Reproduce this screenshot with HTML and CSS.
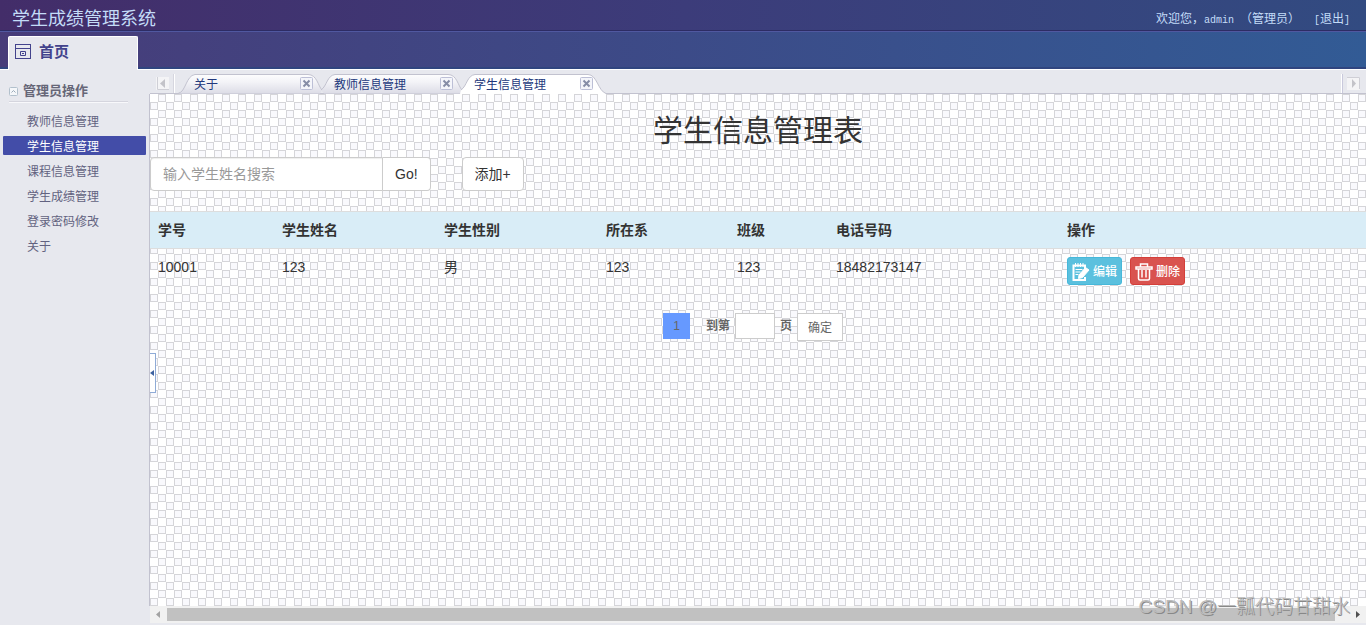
FILE: index.html
```html
<!DOCTYPE html>
<html lang="zh-CN">
<head>
<meta charset="utf-8">
<title>学生成绩管理系统</title>
<link rel="stylesheet" href="styles.css">
</head>
<body>
<svg class="defs" aria-hidden="true">
  <defs>
    <linearGradient id="tab-fill" x1="0" y1="0" x2="0" y2="1">
      <stop offset="0" stop-color="#fdfdfe"/><stop offset="0.4" stop-color="#f3f3f7"/><stop offset="1" stop-color="#dcdce6"/>
    </linearGradient>
    <symbol id="close" viewBox="0 0 13 13"><rect x=".5" y=".5" width="12" height="12" rx="1" fill="#f4f5fa" stroke="#bcbfd6"/><path d="M3.500 3.500l6 6M9.500 3.500l-6 6" stroke="#868da6" stroke-width="2"/></symbol>
  </defs>
</svg>
<header class="header">
  <div class="topbar">
    <h1 class="brand">学生成绩管理系统</h1>
    <p class="welcome">欢迎您，<span class="mono">admin&nbsp;</span>（管理员）</p>
    <a class="logout" href="#"><span class="mono">[</span>退出<span class="mono">]</span></a>
  </div>
  <nav class="mainnav">
    <a class="home" href="#">
      <svg width="16" height="16" viewBox="0 0 16 16" fill="none" stroke="#43438c"><rect x=".5" y=".5" width="15" height="14"/><path d="M1 4.500h14M5.500 7.500h5v4h-5zM7 9.500h2"/></svg>
      首页
    </a>
  </nav>
</header>
<div class="layout">
  <aside class="sidebar">
    <h2 class="group">
      <svg width="9" height="9" viewBox="0 0 9 9" fill="none"><rect x=".5" y=".5" width="8" height="8" rx="1" fill="#f5f7fa" stroke="#b2c0cc"/><path d="M2.500 5.500l2-2 2 2" stroke="#9aaab8"/></svg>
      管理员操作
    </h2>
    <ul class="menu">
      <li><a href="#">教师信息管理</a></li>
      <li><a class="current" href="#">学生信息管理</a></li>
      <li><a href="#">课程信息管理</a></li>
      <li><a href="#">学生成绩管理</a></li>
      <li><a href="#">登录密码修改</a></li>
      <li><a href="#">关于</a></li>
    </ul>
  </aside>
  <main class="main">
    <div class="tabs">
      <button class="scroll left" aria-label="向左"><svg width="13" height="13" viewBox="0 0 13 13"><path d="M0 0h13v13H0z" fill="#f4f4f6"/><path d="M1.500 0v12.500H13" fill="none" stroke="#cfcfd6"/><path d="M9 2v9L4 6.500z" fill="#c3c3c9"/></svg></button>
      <div class="tablist">
        <div class="tab"><svg class="shape" width="150" height="20" viewBox="0 0 150 20"><path d="M-2 19.500C6 18 6 1.500 15 .5H128C137 .5 138 12 142 16L140 19.500z" fill="url(#tab-fill)"/><path d="M-2 19.500C6 18 6 1.500 15 .5H128C137 .5 138 12 142 16" fill="none" stroke="#c2c2cf"/></svg><span class="tabname">关于</span><button class="close" aria-label="关闭"><svg width="13" height="13"><use href="#close"/></svg></button></div>
        <div class="tab"><svg class="shape" width="150" height="20" viewBox="0 0 150 20"><path d="M1 16C7 12 7 1.500 15 .5H128C137 .5 138 12 142 16L140 19.500H4z" fill="url(#tab-fill)"/><path d="M1 16C7 12 7 1.500 15 .5H128C137 .5 138 12 142 16" fill="none" stroke="#c2c2cf"/></svg><span class="tabname">教师信息管理</span><button class="close" aria-label="关闭"><svg width="13" height="13"><use href="#close"/></svg></button></div>
        <div class="tab active"><svg class="shape" width="150" height="20" viewBox="0 0 150 20"><path d="M1 16C7 12 7 1.500 15 .5H128C137 .5 138 17 146 19.500V20H0z" fill="#fff"/><path d="M1 16C7 12 7 1.500 15 .5H128C137 .5 138 17 146 19.500" fill="none" stroke="#c2c2cf"/></svg><span class="tabname">学生信息管理</span><button class="close" aria-label="关闭"><svg width="13" height="13"><use href="#close"/></svg></button></div>
      </div>
      <button class="scroll right" aria-label="向右"><svg width="13" height="13" viewBox="0 0 13 13"><path d="M0 0h13v13H0z" fill="#f4f4f6"/><path d="M0 .5h12.500V12" fill="none" stroke="#cfcfd6"/><path d="M5 2v9l4-4.500z" fill="#c3c3c9"/></svg></button>
    </div>
    <section class="page">
      <button class="splitter" aria-label="收起菜单"><svg width="4" height="6" viewBox="0 0 4 6"><path d="M4 0v6L0 3z" fill="#3d62a0"/></svg></button>
      <h2 class="title">学生信息管理表</h2>
      <form class="search">
        <input class="query" type="text" placeholder="输入学生姓名搜索" aria-label="学生姓名">
        <button class="btn go" type="button">Go!</button>
        <button class="btn add" type="button">添加+</button>
      </form>
      <table class="students">
        <colgroup><col class="w-id"><col class="w-name"><col class="w-name"><col class="w-dept"><col class="w-class"><col class="w-phone"><col></colgroup>
        <thead><tr><th>学号</th><th>学生姓名</th><th>学生性别</th><th>所在系</th><th>班级</th><th>电话号码</th><th>操作</th></tr></thead>
        <tbody><tr><td>10001</td><td>123</td><td>男</td><td>123</td><td>123</td><td>18482173147</td>
          <td><div class="actions">
            <button class="act edit"><svg width="18" height="18" viewBox="0 0 18 18" fill="none" stroke="#fff"><path d="M13 6V2.500H1.500V17H13v-3" stroke-width="2"/><path d="M3.500 0v4M6 0v4M8.500 0v4M11 0v4"/><path d="M3.500 6.500h7M3.500 9h5M3.500 11.500h3"/><path d="M7 12l6.500-7.500L17 7l-6.500 7.500-4 1z" fill="#fff"/></svg>编辑</button>
            <button class="act delete"><svg width="18" height="18" viewBox="0 0 18 18" fill="none" stroke="#fff" stroke-width="1.500"><path d="M1 4h16v2H1zM5.500 3.500V1h7v2.500M3.500 6.500v9q0 1.500 1.500 1.500h8q1.500 0 1.500-1.500v-9M7 7v7.500M11 7v7.500"/></svg>删除</button>
          </div></td></tr></tbody>
      </table>
      <nav class="pager">
        <a class="num" href="#">1</a>
        <label class="jump" for="page-no">到第</label>
        <input class="pageno" id="page-no" type="text">
        <span class="unit">页</span>
        <button class="ok" type="button">确定</button>
      </nav>
    </section>
    <div class="hscroll" aria-hidden="true">
      <svg width="17" height="17" viewBox="0 0 17 17"><path d="M10 5v7L6 8.500z" fill="#a3a3a3"/></svg>
      <span class="thumb"></span>
      <svg width="17" height="17" viewBox="0 0 17 17"><path d="M7 5v7l4-3.500z" fill="#505050"/></svg>
    </div>
  </main>
</div>
<div class="watermark">CSDN @一瓢代码甘甜水</div>
</body>
</html>
```
FILE: styles.css
```css
* { box-sizing: border-box; }
html, body { height: 100%; }
body {
  margin: 0;
  display: flex;
  flex-direction: column;
  overflow: hidden;
  background: #e7e8ee;
  font: 12px/18px "Liberation Sans", "Noto Sans CJK SC", sans-serif;
  color: #333;
}
h1, h2, p, ul { margin: 0; padding: 0; }
a { color: inherit; text-decoration: none; }
button { font: inherit; color: inherit; padding: 0; cursor: pointer; }
svg { display: block; flex: none; }
.defs { position: absolute; width: 0; height: 0; }

.header { flex: none; border-bottom: 1px solid #fff; }
.topbar {
  display: flex;
  align-items: center;
  height: 31px;
  padding: 7px 16px 0 12px;
  background: linear-gradient(90deg, #432d69, #3c3c7a 50%, #324b81);
  border-bottom: 1px solid #2d2c64;
  color: #c4dcf8;
}
.brand { flex: 1; font-size: 18px; line-height: 22px; font-weight: 400; }
.mono { font-family: "Liberation Mono", monospace; font-size: 10px; }
.welcome { margin-right: 14px; padding-top: 2px; }
.logout { padding-top: 2px; }
.mainnav {
  display: flex;
  height: 38px;
  padding: 4px 8px 0;
  background: linear-gradient(90deg, #473c79, #3c4b88 50%, #325b95);
  border-top: 1px solid #5058a0;
  box-shadow: inset 0 -2px 0 #30457f;
}
.home {
  display: flex;
  align-items: center;
  gap: 8px;
  width: 130px;
  height: 34px;
  padding: 0 7px 4px 6px;
  background: #e7e8ee;
  border: 1px solid #fff;
  border-bottom: 0;
  border-radius: 2px 2px 0 0;
  box-shadow: 0 1px 0 #e7e8ee;
  color: #43438c;
  font-size: 15px;
  font-weight: 700;
}

.layout { display: flex; flex: 1; min-height: 0; }
.sidebar { width: 150px; flex: none; padding-top: 11px; }
.group {
  display: flex;
  align-items: center;
  gap: 5px;
  height: 21px;
  margin: 0 22px 0 9px;
  border-bottom: 1px solid #d5d5de;
  box-shadow: 0 1px 0 #f8f8fb;
  color: #666677;
  font-size: 13px;
}
.menu { list-style: none; padding: 7px 4px 0 3px; }
.menu li { padding: 2px 0 4px; }
.menu a { display: block; height: 19px; padding-left: 24px; line-height: 22px; border-radius: 1px; color: #626280; }
.menu .current { background: #434da8; color: #fff; }

.main { display: flex; flex-direction: column; flex: 1; min-width: 0; padding-bottom: 2px; }
.tabs { display: flex; flex: none; height: 24px; padding-top: 4px; border-bottom: 1px solid #c2c2cf; }
.scroll { width: 25px; border: 0; background: none; display: flex; align-items: center; flex: none; }
.left { padding-left: 6px; border-right: 1px solid #fff; box-shadow: -1px 0 0 #d6d6df inset; }
.right { padding-left: 5px; border-left: 1px solid #fff; box-shadow: 1px 0 0 #c9c9dc inset; }
.tablist { display: flex; flex: 1; padding-left: 5px; }
.tab { position: relative; display: flex; align-items: center; width: 140px; height: 20px; padding-left: 14px; color: #22387c; line-height: 20px; }
.shape { position: absolute; left: 0; top: 0; overflow: visible; }
.tabname { position: relative; flex: 1; padding-top: 1px; }
.close { position: relative; border: 0; background: none; margin-right: 7px; padding-bottom: 1px; }

.page {
  position: relative;
  flex: 1;
  min-height: 0;
  border-left: 1px solid #c2c2cf;
  margin-left: -1px;
  background: #fff url("data:image/svg+xml,%3Csvg xmlns='http://www.w3.org/2000/svg' width='16' height='16'%3E%3Cg fill='%23f9f9fd' stroke='%23d5d5d9'%3E%3Crect x='8.5' y='.5' width='7' height='7'/%3E%3Crect x='.5' y='8.5' width='7' height='7'/%3E%3C/g%3E%3C/svg%3E");
  font-size: 14px;
  line-height: 20px;
}
.title { padding-top: 20px; text-align: center; font-size: 30px; line-height: 33px; font-weight: 400; }
.search { display: flex; margin: 10px 0 20px; }
.query { width: 233px; height: 34px; padding: 0 12px; border: 1px solid #ccc; border-radius: 4px 0 0 4px; font: inherit; background: #fff; box-shadow: inset 0 1px 1px #eee; }
.query::placeholder { color: #999; opacity: 1; }
.btn { height: 34px; padding: 0 12px; border: 1px solid #ccc; border-radius: 4px; background: #fff; }
.go { border-radius: 0 4px 4px 0; border-left: 0; }
.add { margin-left: 31px; }
.students { width: 100%; table-layout: fixed; border-collapse: collapse; }
.w-id { width: 124px; }
.w-name { width: 162px; }
.w-dept { width: 131px; }
.w-class { width: 99px; }
.w-phone { width: 231px; }
.students th { padding: 8px; text-align: left; background: #d9edf7; border-top: 1px solid #ddd; border-bottom: 1px solid #ddd; }
.students td { padding: 8px; vertical-align: top; }
.actions { display: flex; gap: 8px; }
.act { display: flex; align-items: center; justify-content: space-between; width: 55px; height: 28px; padding: 2px 4px 0; border-radius: 3px; border: 1px solid #46b8da; background: #5bc0de; color: #fff; font-size: 12px; font-weight: 500; }
.delete { border-color: #d43f3a; background: #d9534f; }
.pager { display: flex; justify-content: center; margin: 20px 10px 0 0; color: #666; font-size: 12px; line-height: 26px; }
.num { width: 27px; height: 26px; background: #6699ff; text-align: center; }
.jump { margin: 0 5px 0 16px; font-weight: 700; }
.pageno { width: 40px; height: 26px; border: 1px solid #ccc; background: #fff; padding: 0 4px; }
.unit { margin: 0 5px; font-weight: 700; }
.ok { width: 46px; height: 28px; padding-top: 1px; border: 1px solid #ccc; background: #fff; }
.splitter { position: absolute; left: 0; top: 259px; display: flex; align-items: center; width: 6px; height: 40px; border: 1px solid #8fabd6; border-left: 0; background: #fff; }

.hscroll { display: flex; align-items: center; height: 17px; background: #f1f1f1; flex: none; }
.thumb { flex: 1; height: 13px; background: #c1c1c1; margin-right: 14px; }
.watermark {
  position: absolute;
  right: 16px;
  bottom: 4px;
  font-size: 19px;
  line-height: 28px;
  font-weight: 300;
  color: #bbb;
  text-shadow: 1px 1px 0 #888;
}
```
